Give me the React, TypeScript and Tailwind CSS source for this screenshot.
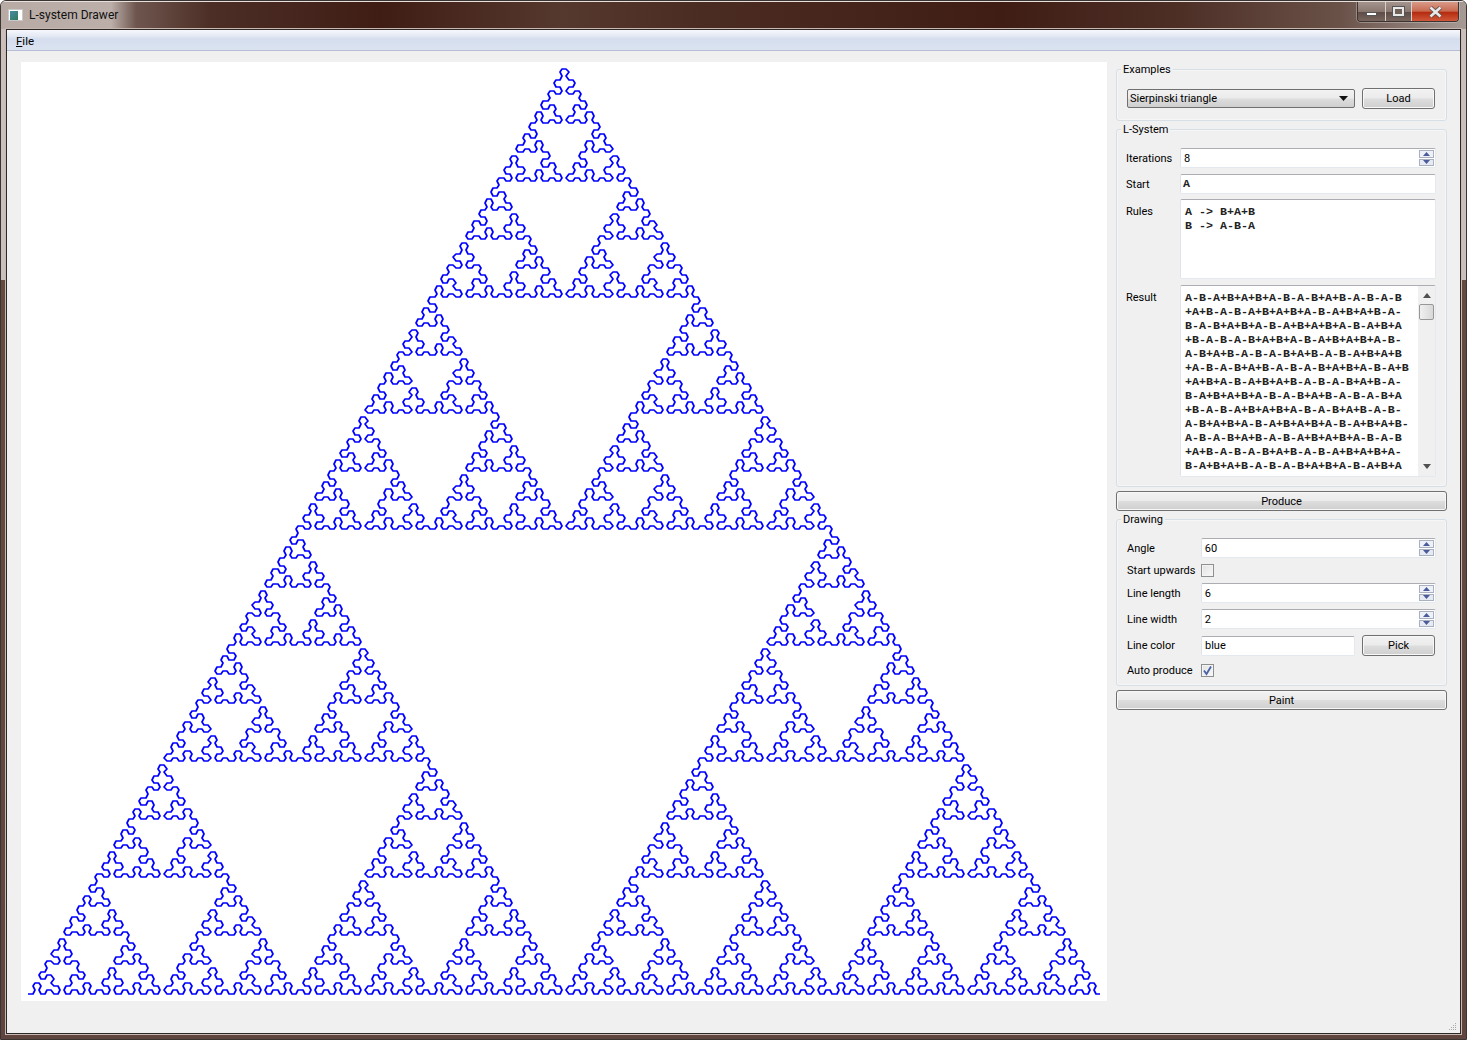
import { useMemo, type ReactNode } from 'react';

const resultLines = [
  'A-B-A+B+A+B+A-B-A-B+A+B-A-B-A-B',
  '+A+B-A-B-A+B+A+B+A-B-A+B+A+B-A-',
  'B-A-B+A+B+A-B-A+B+A+B+A-B-A+B+A',
  '+B-A-B-A-B+A+B+A-B-A+B+A+B+A-B-',
  'A-B+A+B-A-B-A-B+A+B-A-B-A+B+A+B',
  '+A-B-A-B+A+B-A-B-A-B+A+B+A-B-A+B',
  '+A+B+A-B-A+B+A+B-A-B-A-B+A+B-A-',
  'B-A+B+A+B+A-B-A-B+A+B-A-B-A-B+A',
  '+B-A-B-A+B+A+B+A-B-A-B+A+B-A-B-',
  'A-B+A+B+A-B-A+B+A+B+A-B-A+B+A+B-',
  'A-B-A-B+A+B-A-B-A+B+A+B+A-B-A-B',
  '+A+B-A-B-A-B+A+B-A-B-A+B+A+B+A-',
  'B-A+B+A+B-A-B-A-B+A+B+A-B-A+B+A',
];

// same rules as the app: A -> B+A+B, B -> A-B-A
function produce(iterations: number) {
  let s = 'A';
  for (let i = 0; i < iterations; i++) {
    let next = '';
    for (const c of s) {
      if (c === 'A') next += 'B+A+B';
      else if (c === 'B') next += 'A-B-A';
      else next += c;
    }
    s = next;
  }
  return s;
}

function turtlePath(program: string, x0: number, y0: number, len: number) {
  let x = x0;
  let y = y0;
  let a = 0;
  const parts = [`M${Math.round(x)} ${Math.round(y)}`];
  for (const c of program) {
    if (c === '+') a += 60;
    else if (c === '-') a -= 60;
    else {
      x += len * Math.cos((a * Math.PI) / 180);
      y += len * Math.sin((a * Math.PI) / 180);
      parts.push(`L${Math.round(x)} ${Math.round(y)}`);
    }
  }
  return parts.join('');
}

function Canvas() {
  const d = useMemo(() => turtlePath(produce(8), 7.4, 931.5, 4.1875), []);
  return (
    <div className="w-[1086px] h-[939px] bg-white shrink-0">
      <svg width="1086" height="939" className="block">
        <path d={d} fill="none" stroke="#0000ff" strokeWidth="1.7" strokeLinejoin="round" />
      </svg>
    </div>
  );
}

function Button({ label, className }: { label: string; className: string }) {
  return (
    <div
      className={`flex items-center justify-center pt-[2px] rounded-[3px] border border-[#707070] text-black shadow-[inset_0_0_0_1px_#f8f8f8] bg-[linear-gradient(180deg,#f2f2f2_0%,#ebebeb_48%,#dddddd_52%,#cfcfcf_100%)] ${className}`}
    >
      {label}
    </div>
  );
}

function Field({ children, className }: { children?: ReactNode; className: string }) {
  return (
    <div
      className={`relative flex items-center bg-white rounded-[2px] border border-[#e3e9ef] border-t-[#abadb3] border-l-[#e2e3ea] ${className}`}
    >
      {children}
    </div>
  );
}

function SpinBox({ value, className }: { value: string; className: string }) {
  return (
    <Field className={`h-[20px] pl-[3px] pt-[2px] ${className}`}>
      {value}
      <div className="absolute right-[1px] top-[1px] w-[15px] h-[16px] flex flex-col gap-[1px]">
        <div className="flex-1 flex items-center justify-center border border-[#a9b0c0] bg-[#eef1f7]">
          <svg width="7" height="4">
            <path d="M0 4L3.5 0L7 4Z" fill="#4a5a9a" />
          </svg>
        </div>
        <div className="flex-1 flex items-center justify-center border border-[#a9b0c0] bg-[#e6eaf2]">
          <svg width="7" height="4">
            <path d="M0 0L7 0L3.5 4Z" fill="#4a5a9a" />
          </svg>
        </div>
      </div>
    </Field>
  );
}

function CheckBox({ checked }: { checked?: boolean }) {
  return (
    <div className="w-[13px] h-[13px] flex items-center justify-center border border-[#8e8f8f] bg-[linear-gradient(135deg,#e2e2e2,#f8f8f8)] shadow-[inset_0_0_0_1px_#f4f4f4]">
      {checked && (
        <svg width="11" height="11" viewBox="0 0 11 11">
          <path d="M2 5.5L4.5 9L9 1.5" fill="none" stroke="#4a62a8" strokeWidth="1.8" />
        </svg>
      )}
    </div>
  );
}

function GroupBox({ title, className, children }: { title: string; className: string; children: ReactNode }) {
  return (
    <div
      className={`relative w-[331px] rounded-[3px] border border-[#d5dfe5] shadow-[inset_0_0_0_1px_#f6f6f6] ${className}`}
    >
      <span className="absolute left-[4px] top-[-7px] px-[2px] bg-[#f0f0f0] leading-[13px]">{title}</span>
      {children}
    </div>
  );
}

function Scrollbar() {
  return (
    <div className="absolute right-0 top-0 bottom-0 w-[17px] bg-[#f0f0f0] flex flex-col items-center">
      <svg width="8" height="5" className="mt-[7px]">
        <path d="M0 5L4 0L8 5Z" fill="#505050" />
      </svg>
      <div className="mt-[6px] w-[15px] h-[16px] rounded-[2px] border border-[#979797] bg-[linear-gradient(90deg,#f0f0f0,#d8d8d8)]" />
      <svg width="8" height="5" className="mt-auto mb-[7px]">
        <path d="M0 0L8 0L4 5Z" fill="#505050" />
      </svg>
    </div>
  );
}

function SidePanel() {
  const mono = "font-['Liberation_Mono',monospace] text-[11.67px] leading-[14px] font-semibold text-[#222]";
  return (
    <div className="w-[331px] pt-[7px] flex flex-col text-[11px] text-black">
      <GroupBox title="Examples" className="h-[52px] pl-[10px] pr-[11px] pt-[18px]">
        <div className="flex items-center">
          <div className="w-[228px] h-[19px] pl-[2px] pr-[6px] pt-[2px] flex items-center justify-between rounded-[2px] border border-[#707070] bg-[linear-gradient(180deg,#f2f2f2_0%,#ebebeb_48%,#dddddd_52%,#cfcfcf_100%)]">
            Sierpinski triangle
            <svg width="9" height="5" className="-mt-[2px]">
              <path d="M0 0L9 0L4.5 5Z" fill="#111" />
            </svg>
          </div>
          <Button label="Load" className="ml-[7px] w-[73px] h-[21px]" />
        </div>
      </GroupBox>

      <GroupBox title="L-System" className="mt-[8px] h-[358px] pl-[9px] pr-[10px] pt-[18px]">
        <div className="flex items-center">
          <span className="w-[54px] pt-[2px]">Iterations</span>
          <SpinBox value="8" className="w-[256px]" />
        </div>
        <div className="flex items-center mt-[6px]">
          <span className="w-[54px] pt-[2px]">Start</span>
          <Field className={`w-[256px] h-[20px] pl-[2px] ${mono}`}>A</Field>
        </div>
        <div className="flex items-start mt-[5px]">
          <span className="w-[54px] pt-[5px]">Rules</span>
          <Field className={`w-[256px] h-[80px] !items-start pl-[4px] pt-[5px] whitespace-pre ${mono}`}>
            {'A -> B+A+B\nB -> A-B-A'}
          </Field>
        </div>
        <div className="flex items-start mt-[6px]">
          <span className="w-[54px] pt-[5px]">Result</span>
          <Field className="w-[256px] h-[192px] !items-start pl-[4px] pt-[5px] overflow-hidden">
            <div className={mono}>
              {resultLines.map((line) => (
                <div key={line} className="whitespace-pre">
                  {line}
                </div>
              ))}
            </div>
            <Scrollbar />
          </Field>
        </div>
      </GroupBox>

      <Button label="Produce" className="mt-[4px] w-[331px] h-[20px]" />

      <GroupBox title="Drawing" className="mt-[8px] h-[167px] pl-[10px] pr-[10px] pt-[18px]">
        <div className="flex items-center">
          <span className="w-[74px] pt-[2px]">Angle</span>
          <SpinBox value="60" className="w-[236px]" />
        </div>
        <div className="flex items-center mt-[5px] h-[14px]">
          <span className="w-[74px] pt-[2px] whitespace-nowrap">Start upwards</span>
          <CheckBox />
        </div>
        <div className="flex items-center mt-[6px]">
          <span className="w-[74px] pt-[2px]">Line length</span>
          <SpinBox value="6" className="w-[236px]" />
        </div>
        <div className="flex items-center mt-[6px]">
          <span className="w-[74px] pt-[2px]">Line width</span>
          <SpinBox value="2" className="w-[236px]" />
        </div>
        <div className="flex items-center mt-[6px]">
          <span className="w-[74px] pt-[2px]">Line color</span>
          <Field className="w-[154px] h-[20px] pl-[3px] pt-[2px]">blue</Field>
          <Button label="Pick" className="ml-[7px] w-[73px] h-[21px]" />
        </div>
        <div className="flex items-center mt-[7px] h-[14px]">
          <span className="w-[74px] pt-[2px] whitespace-nowrap">Auto produce</span>
          <CheckBox checked />
        </div>
      </GroupBox>

      <Button label="Paint" className="mt-[4px] w-[331px] h-[20px]" />
    </div>
  );
}

function WindowButtons() {
  return (
    <div className="flex h-[20px] mr-[7px] rounded-b-[4px] border border-t-0 border-[#3c3431] overflow-hidden shadow-[0_0_0_1px_#d8d0cc66]">
      <div className="w-[28px] flex items-center justify-center border-r border-[#d8d0cc] bg-[linear-gradient(180deg,#a4948e_0%,#8a7870_50%,#5f4d47_55%,#77655e_100%)]">
        <div className="w-[11px] h-[4px] mt-[5px] bg-white border border-[#555]" />
      </div>
      <div className="w-[26px] flex items-center justify-center border-r border-[#d8d0cc] bg-[linear-gradient(180deg,#a4948e_0%,#8a7870_50%,#5f4d47_55%,#77655e_100%)]">
        <div className="w-[11px] h-[9px] border-[2px] border-[#e8e8e8] bg-[#6f6058] outline outline-1 outline-[#555]" />
      </div>
      <div className="w-[46px] flex items-center justify-center bg-[linear-gradient(180deg,#d89a88_0%,#c86a50_48%,#b52c10_55%,#d0583a_100%)]">
        <svg width="15" height="12" viewBox="0 0 15 12">
          <path d="M2.5 1.5L12.5 10.5M12.5 1.5L2.5 10.5" stroke="#5a4a46" strokeWidth="4.2" />
          <path d="M2.5 1.5L12.5 10.5M12.5 1.5L2.5 10.5" stroke="#e8e8e8" strokeWidth="2.6" />
        </svg>
      </div>
    </div>
  );
}

export default function App() {
  return (
    <div className="w-[1467px] h-[1040px] flex flex-col overflow-hidden rounded-t-[6px] border border-[#3a3432] bg-[linear-gradient(180deg,#cabfba_0,#cabfba_279px,#654a42_279px,#5f453d_100%)] font-['Roboto','Liberation_Sans',sans-serif]">
      {/* title bar */}
      <div className="h-[28px] shrink-0 flex items-start justify-between border-t border-[#e8e0dc] bg-[linear-gradient(90deg,#b8aba6_0px,#bcaea9_110px,#6e564e_135px,#4c2e26_210px,#3f1d15_380px,#55382e_560px,#4b2c22_700px,#3f1d15_1000px,#4d2f26_1180px,#6a5249_1340px,#9a8c86_1440px,#a89c96_1467px)]">
        <div className="flex items-center h-[26px] pl-[7px]">
          <div className="w-[15px] h-[12px] flex items-end border border-[#c8c8c8] bg-white">
            <div className="w-[8px] h-[9px] ml-[1px] bg-[linear-gradient(135deg,#4a8aa8,#2f7a5a)]" />
          </div>
          <span className="ml-[6px] text-[12px] text-[#111]">L-system Drawer</span>
        </div>
        <WindowButtons />
      </div>

      {/* client area */}
      <div className="flex-1 min-h-0 mx-[5px] mb-[5px] relative flex flex-col bg-[#f0f0f0] border border-[#2c2826] shadow-[0_0_0_1px_#c9b8b2]">
        <div className="h-[21px] shrink-0 flex items-center pl-[9px] pt-[3px] text-[11.5px] text-black border-b border-[#b5bdd6] bg-[linear-gradient(180deg,#f6f8fc_0%,#e4e9f4_30%,#d5deee_45%,#dbe3f1_100%)]">
          <span>
            <span className="underline">F</span>ile
          </span>
        </div>
        <div className="flex-1 min-h-0 flex items-start pl-[14px] pt-[11px] gap-[9px]">
          <Canvas />
          <SidePanel />
        </div>
        {/* size grip */}
        <svg width="9" height="9" className="absolute right-[3px] bottom-[2px]">
          <path d="M7 1h1v1H7zM5 3h1v1H5zM7 3h1v1H7zM3 5h1v1H3zM5 5h1v1H5zM7 5h1v1H7zM1 7h1v1H1zM3 7h1v1H3zM5 7h1v1H5zM7 7h1v1H7z" fill="#a8a8a8" />
        </svg>
      </div>
    </div>
  );
}
